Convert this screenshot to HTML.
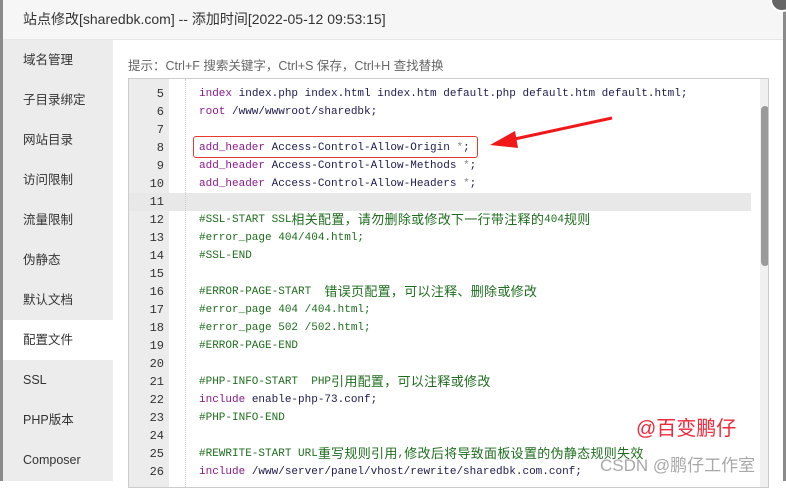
<!DOCTYPE html><html><head><meta charset="utf-8"><style>
*{margin:0;padding:0;box-sizing:border-box}
body{width:786px;height:481px;overflow:hidden;background:#fff;position:relative;font-family:"Liberation Sans","Noto Sans CJK SC",sans-serif}
.lb{position:absolute;left:0;top:0;width:3px;height:481px;background:#8a8a8a}
.rb{position:absolute;right:0;top:0;width:3px;height:481px;background:#8a8a8a}
.title{position:absolute;left:3px;top:0;width:780px;height:40px;background:#f6f6f6;border-bottom:1px solid #e6e6e6;font-size:14px;color:#333;line-height:38px;padding-left:20px}
.close{position:absolute;left:770px;top:-12px;width:24px;height:24px;border-radius:50%;background:#666;border:2px solid #fff}
.side{position:absolute;left:3px;top:40px;width:110px;height:441px;background:#ececec}
.side div{height:40px;line-height:40px;padding-left:20px;font-size:12.5px;color:#333}
.side .act{background:#fff}
.hint{position:absolute;left:128px;top:55px;font-size:12.5px;color:#666}
.ed{position:absolute;left:128px;top:78px;width:641px;height:410px;border:1px solid #ccc;overflow:hidden}
.gut{position:absolute;left:0;top:0;width:40px;height:100%;background:#ececec}
.guide{position:absolute;left:56px;top:0;height:100%;border-left:1px dotted #ccc}
.hl{position:absolute;left:0;width:622px;height:18px;background:#e8e8e8}
.ln{position:absolute;left:0;width:35px;text-align:right;font:12px/18px "Liberation Mono",monospace;color:#333}
.c{position:absolute;left:70px;height:18px;white-space:pre;font:11px/18px "Liberation Mono","Noto Sans CJK SC",monospace;color:#1e1a4e}
.z{font-family:"Noto Sans CJK SC",sans-serif;font-size:13px;letter-spacing:.3px;line-height:0;position:relative;top:2px}
.k{color:#8b1a8b}.g{color:#1f6e1f}.s{color:#888}
.sb{position:absolute;left:631px;top:0;width:10px;height:100%;background:#f0f0f0}
.th{position:absolute;left:1px;top:27px;width:8px;height:160px;background:#9a9a9a;border-radius:4px}
.box{position:absolute;left:193px;top:136px;width:285px;height:22px;border:1px solid #e53b2c;border-radius:3px}
.wm1{position:absolute;left:636px;top:412px;color:#f0283a;font-size:20px}
.wm2{position:absolute;left:600px;top:451px;color:#999;font-size:17px;opacity:.85}
</style></head><body>
<div class="lb"></div><div class="rb"></div>
<div class="title">站点修改[sharedbk.com] -- 添加时间[2022-05-12 09:53:15]</div>
<div class="close"></div>
<div class="side"><div>域名管理</div><div>子目录绑定</div><div>网站目录</div><div>访问限制</div><div>流量限制</div><div>伪静态</div><div>默认文档</div><div class="act">配置文件</div><div>SSL</div><div>PHP版本</div><div>Composer</div></div>
<div class="hint">提示：Ctrl+F 搜索关键字，Ctrl+S 保存，Ctrl+H 查找替换</div>
<div class="ed">
<div class="gut"></div>
<div class="hl" style="top:114px"></div>
<div class="guide"></div>
<div class="ln" style="top:6px">5</div><div class="c" style="top:6px"><span class="k">index</span> index.php index.html index.htm default.php default.htm default.html;</div>
<div class="ln" style="top:24px">6</div><div class="c" style="top:24px"><span class="k">root</span> /www/wwwroot/sharedbk;</div>
<div class="ln" style="top:42px">7</div>
<div class="ln" style="top:60px">8</div><div class="c" style="top:60px"><span class="k">add_header</span> Access-Control-Allow-Origin <span class="s">*</span>;</div>
<div class="ln" style="top:78px">9</div><div class="c" style="top:78px"><span class="k">add_header</span> Access-Control-Allow-Methods <span class="s">*</span>;</div>
<div class="ln" style="top:96px">10</div><div class="c" style="top:96px"><span class="k">add_header</span> Access-Control-Allow-Headers <span class="s">*</span>;</div>
<div class="ln" style="top:114px">11</div>
<div class="ln" style="top:132px">12</div><div class="c g" style="top:132px">#SSL-START SSL<span class="z">相关配置，请勿删除或修改下一行带注释的</span>404<span class="z">规则</span></div>
<div class="ln" style="top:150px">13</div><div class="c g" style="top:150px">#error_page 404/404.html;</div>
<div class="ln" style="top:168px">14</div><div class="c g" style="top:168px">#SSL-END</div>
<div class="ln" style="top:186px">15</div>
<div class="ln" style="top:204px">16</div><div class="c g" style="top:204px">#ERROR-PAGE-START  <span class="z">错误页配置，可以注释、删除或修改</span></div>
<div class="ln" style="top:222px">17</div><div class="c g" style="top:222px">#error_page 404 /404.html;</div>
<div class="ln" style="top:240px">18</div><div class="c g" style="top:240px">#error_page 502 /502.html;</div>
<div class="ln" style="top:258px">19</div><div class="c g" style="top:258px">#ERROR-PAGE-END</div>
<div class="ln" style="top:276px">20</div>
<div class="ln" style="top:294px">21</div><div class="c g" style="top:294px">#PHP-INFO-START  PHP<span class="z">引用配置，可以注释或修改</span></div>
<div class="ln" style="top:312px">22</div><div class="c" style="top:312px"><span class="k">include</span> enable-php-73.conf;</div>
<div class="ln" style="top:330px">23</div><div class="c g" style="top:330px">#PHP-INFO-END</div>
<div class="ln" style="top:348px">24</div>
<div class="ln" style="top:366px">25</div><div class="c g" style="top:366px">#REWRITE-START URL<span class="z">重写规则引用</span>,<span class="z">修改后将导致面板设置的伪静态规则失效</span></div>
<div class="ln" style="top:384px">26</div><div class="c" style="top:384px"><span class="k">include</span> /www/server/panel/vhost/rewrite/sharedbk.com.conf;</div>
<div class="sb"><div class="th"></div></div>
</div>
<div class="box"></div>
<svg style="position:absolute;left:0;top:0" width="786" height="481"><path d="M612 118 L510 140" stroke="#f01818" stroke-width="3"/><path d="M490 145 L515 131 L518 148 Z" fill="#f01818"/></svg>
<div class="wm1">@百变鹏仔</div>
<div class="wm2">CSDN @鹏仔工作室</div>
</body></html>
